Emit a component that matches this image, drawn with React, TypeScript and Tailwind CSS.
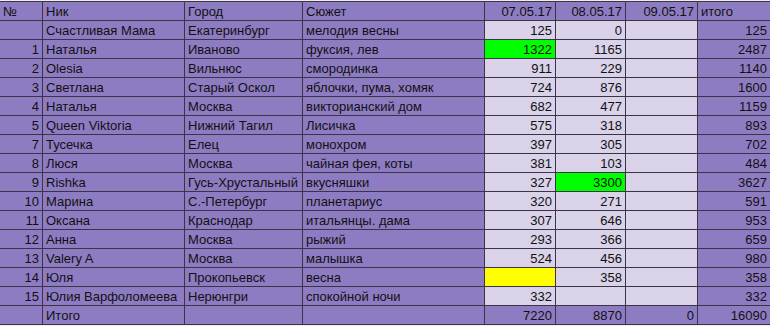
import React from "react";

type Row = {
  n: string;
  nick: string;
  city: string;
  plot: string;
  d1: string;
  d2: string;
  d3: string;
  total: string;
  d1bg?: string;
  d2bg?: string;
};

const rows: Row[] = [
  { n: "", nick: "Счастливая Мама", city: "Екатеринбург", plot: "мелодия весны", d1: "125", d2: "0", d3: "", total: "125" },
  { n: "1", nick: "Наталья", city: "Иваново", plot: "фуксия, лев", d1: "1322", d2: "1165", d3: "", total: "2487", d1bg: "green" },
  { n: "2", nick: "Olesia", city: "Вильнюс", plot: "смородинка", d1: "911", d2: "229", d3: "", total: "1140" },
  { n: "3", nick: "Светлана", city: "Старый Оскол", plot: "яблочки, пума, хомяк", d1: "724", d2: "876", d3: "", total: "1600" },
  { n: "4", nick: "Наталья", city: "Москва", plot: "викторианский дом", d1: "682", d2: "477", d3: "", total: "1159" },
  { n: "5", nick: "Queen Viktoria", city: "Нижний Тагил", plot: "Лисичка", d1: "575", d2: "318", d3: "", total: "893" },
  { n: "7", nick: "Тусечка", city: "Елец", plot: "монохром", d1: "397", d2: "305", d3: "", total: "702" },
  { n: "8", nick: "Люся", city: "Москва", plot: "чайная фея, коты", d1: "381", d2: "103", d3: "", total: "484" },
  { n: "9", nick: "Rishka", city: "Гусь-Хрустальный", plot: "вкусняшки", d1: "327", d2: "3300", d3: "", total: "3627", d2bg: "green" },
  { n: "10", nick: "Марина", city: "С.-Петербург", plot: "планетариус", d1: "320", d2: "271", d3: "", total: "591" },
  { n: "11", nick: "Оксана", city: "Краснодар", plot: "итальянцы. дама", d1: "307", d2: "646", d3: "", total: "953" },
  { n: "12", nick: "Анна", city: "Москва", plot: "рыжий", d1: "293", d2: "366", d3: "", total: "659" },
  { n: "13", nick: "Valery A", city: "Москва", plot: "малышка", d1: "524", d2: "456", d3: "", total: "980" },
  { n: "14", nick: "Юля", city: "Прокопьевск", plot: "весна", d1: "", d2: "358", d3: "", total: "358", d1bg: "yellow" },
  { n: "15", nick: "Юлия Варфоломеева", city: "Нерюнгри", plot: "спокойной ночи", d1: "332", d2: "", d3: "", total: "332" },
];

const cell = "border border-[#3a3446] px-[3px] h-[19px] leading-[17px] whitespace-nowrap overflow-hidden";
const purple = "bg-[#8e7cc3]";
const light = "bg-[#d9d2e9]";

function bgFor(k?: string) {
  if (k === "green") return "bg-[#00ff00]";
  if (k === "yellow") return "bg-[#ffff00]";
  return light;
}

export default function App() {
  return (
    <div
      className="w-[770px] h-[326px] bg-[#ececec] overflow-hidden pt-[1px] text-[13px] text-[#111]"
      style={{ fontFamily: '"Liberation Sans", Arial, sans-serif' }}
    >
      <table className="border-collapse table-fixed w-[771px] -ml-[1px]">
        <colgroup>
          <col className="w-[43px]" />
          <col className="w-[142px]" />
          <col className="w-[118px]" />
          <col className="w-[182px]" />
          <col className="w-[71px]" />
          <col className="w-[70px]" />
          <col className="w-[72px]" />
          <col className="w-[73px]" />
        </colgroup>
        <tbody>
          <tr>
            <td className={`${cell} ${purple} text-left`}>№</td>
            <td className={`${cell} ${purple}`}>Ник</td>
            <td className={`${cell} ${purple}`}>Город</td>
            <td className={`${cell} ${purple}`}>Сюжет</td>
            <td className={`${cell} ${purple} text-right`}>07.05.17</td>
            <td className={`${cell} ${purple} text-right`}>08.05.17</td>
            <td className={`${cell} ${purple} text-right`}>09.05.17</td>
            <td className={`${cell} ${purple}`}>итого</td>
          </tr>
          {rows.map((r, i) => (
            <tr key={i}>
              <td className={`${cell} ${purple} text-right`}>{r.n}</td>
              <td className={`${cell} ${purple}`}>{r.nick}</td>
              <td className={`${cell} ${purple}`}>{r.city}</td>
              <td className={`${cell} ${purple}`}>{r.plot}</td>
              <td className={`${cell} ${bgFor(r.d1bg)} text-right`}>{r.d1}</td>
              <td className={`${cell} ${bgFor(r.d2bg)} text-right`}>{r.d2}</td>
              <td className={`${cell} ${light} text-right`}>{r.d3}</td>
              <td className={`${cell} ${purple} text-right`}>{r.total}</td>
            </tr>
          ))}
          <tr>
            <td className={`${cell} ${purple}`}></td>
            <td className={`${cell} ${purple}`}>Итого</td>
            <td className={`${cell} ${purple}`}></td>
            <td className={`${cell} ${purple}`}></td>
            <td className={`${cell} ${purple} text-right`}>7220</td>
            <td className={`${cell} ${purple} text-right`}>8870</td>
            <td className={`${cell} ${purple} text-right`}>0</td>
            <td className={`${cell} ${purple} text-right`}>16090</td>
          </tr>
        </tbody>
      </table>
    </div>
  );
}
